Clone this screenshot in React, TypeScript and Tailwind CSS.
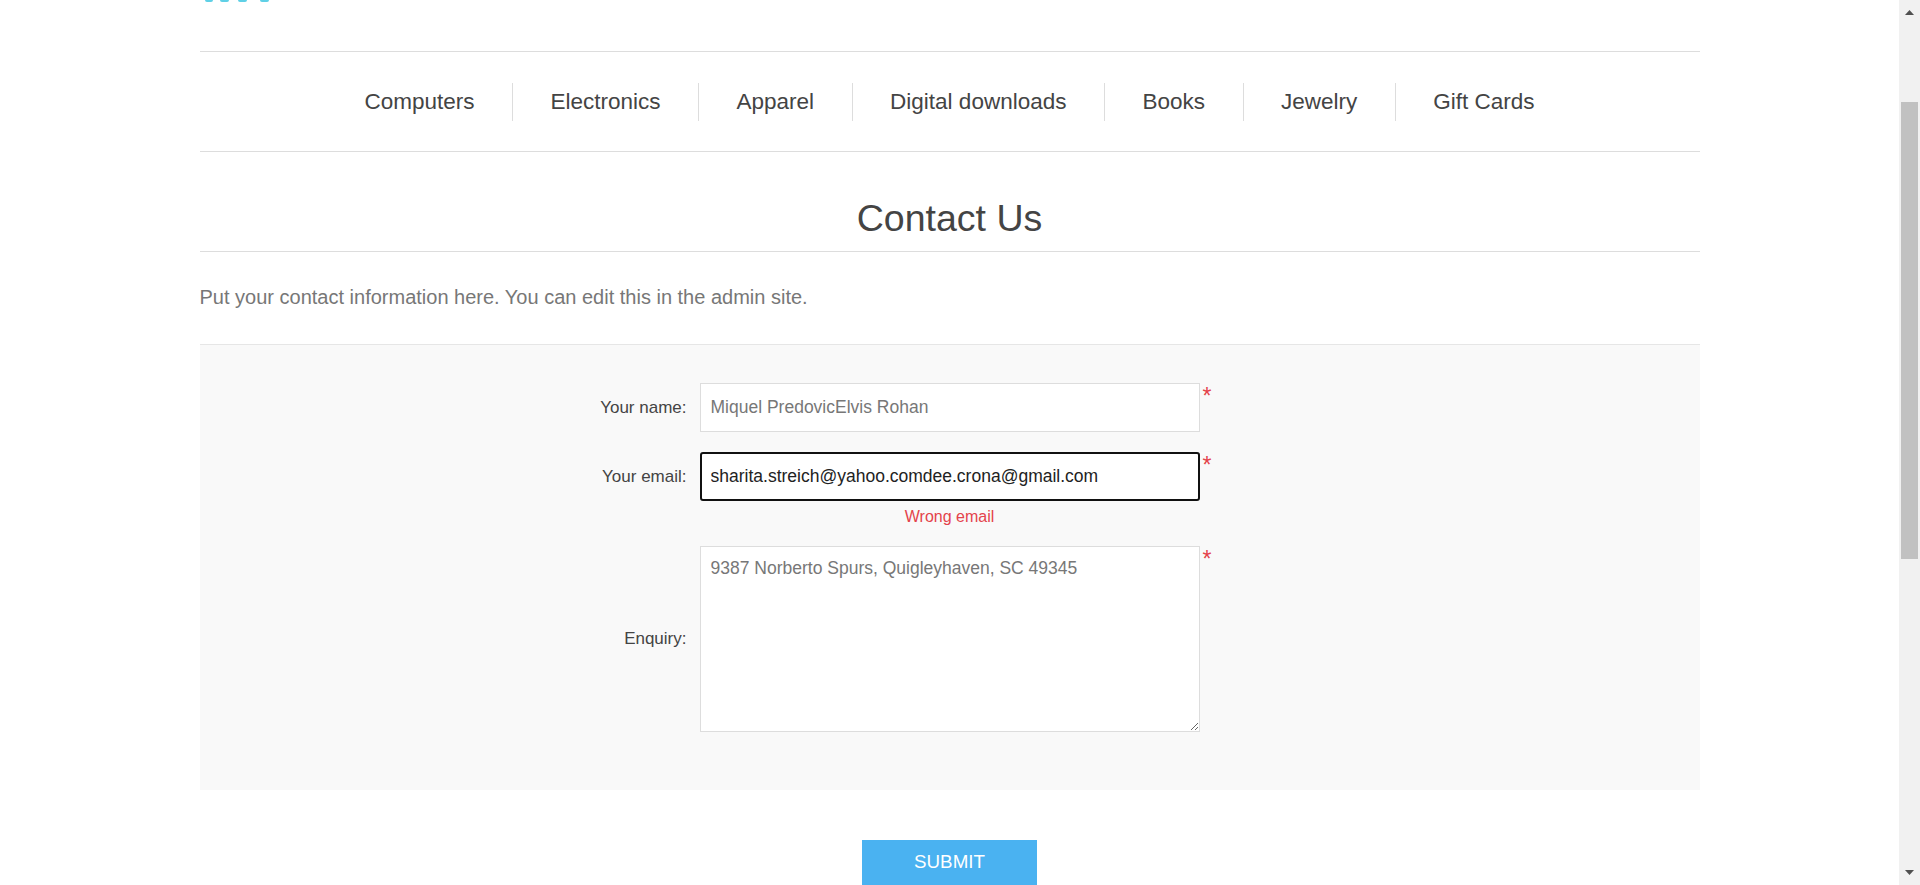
import React from "react";

const menu = ["Computers", "Electronics", "Apparel", "Digital downloads", "Books", "Jewelry", "Gift Cards"];

function Required() {
  return <span className="ml-[3px] mt-[2px] self-start text-[23px] leading-none text-[#e4434b]">*</span>;
}

export default function App() {
  return (
    <div className="flex h-[885px] overflow-hidden bg-white font-['Liberation_Sans',Arial,sans-serif]">
      {/* page */}
      <div className="flex-1">
        <div className="mx-auto w-[1500px]">
          {/* header (scrolled, logo bottom edge only) */}
          <div className="flex h-[51px] items-start gap-[7px] pl-[5px]">
            <span className="h-[2px] w-[8px] rounded-b-full bg-[#5fd0e6]" />
            <span className="h-[2px] w-[9px] rounded-b-full bg-[#5fd0e6]" />
            <span className="ml-[2px] h-[2px] w-[9px] rounded-b-full bg-[#5fd0e6]" />
            <span className="ml-[6px] h-[2px] w-[9px] rounded-b-full bg-[#5fd0e6]" />
          </div>

          {/* top menu */}
          <nav className="flex h-[101px] items-center justify-center border-y border-[#ddd]">
            {menu.map((item, i) => (
              <div
                key={item}
                className={
                  i === 0
                    ? "px-[37.5px] text-[22.5px] leading-[38px] text-[#444]"
                    : "border-l border-[#ddd] px-[37.5px] text-[22.5px] leading-[38px] text-[#444]"
                }
              >
                {item}
              </div>
            ))}
          </nav>

          {/* title */}
          <div className="border-b border-[#ddd] pt-[44px] pb-[10px] text-center">
            <h1 className="text-[37.5px] leading-[45px] text-[#444]">Contact Us</h1>
          </div>

          <p className="mt-[34px] mb-[35px] text-[20px] leading-[23px] text-[#777]">
            Put your contact information here. You can edit this in the admin site.
          </p>

          {/* form */}
          <div className="border-t border-[#e6e6e6] bg-[#f9f9f9] pt-[38px] pb-[58px]">
            <div className="flex items-center">
              <label className="w-[500px] pr-[13px] text-right text-[17px] text-[#444]">Your name:</label>
              <input
                readOnly
                defaultValue="Miquel PredovicElvis Rohan"
                className="h-[49px] w-[500px] border border-[#ddd] bg-white px-[10px] text-[17.5px] text-[#777] outline-none"
              />
              <Required />
            </div>

            <div className="mt-[20px] flex items-center">
              <label className="w-[500px] pr-[13px] text-right text-[17px] text-[#444]">Your email:</label>
              <input
                readOnly
                defaultValue="sharita.streich@yahoo.comdee.crona@gmail.com"
                className="h-[49px] w-[500px] rounded-[3px] border-2 border-[#111] bg-white px-[9px] text-[17.5px] text-[#222] outline-none"
              />
              <Required />
            </div>
            <div className="mt-[6px] flex">
              <div className="w-[500px]" />
              <span className="w-[500px] text-center text-[16px] leading-[20px] text-[#e4434b]">Wrong email</span>
            </div>

            <div className="mt-[19px] flex items-center">
              <label className="w-[500px] pr-[13px] text-right text-[17px] text-[#444]">Enquiry:</label>
              <textarea
                readOnly
                defaultValue="9387 Norberto Spurs, Quigleyhaven, SC 49345"
                className="h-[186px] w-[500px] border border-[#ddd] bg-white px-[10px] py-[10px] text-[17.5px] leading-[22px] text-[#777] outline-none"
              />
              <Required />
            </div>
          </div>

          <div className="mt-[50px] flex justify-center">
            <button className="h-[45px] w-[175px] bg-[#4ab2f1] text-[18.75px] text-white">SUBMIT</button>
          </div>
        </div>
      </div>

      {/* scrollbar */}
      <div className="flex w-[21px] flex-col bg-[#f1f1f1]">
        <div className="flex h-[25px] items-center justify-center">
          <svg width="9" height="5" viewBox="0 0 9 5">
            <path d="M4.5 0L9 5H0z" fill="#505050" />
          </svg>
        </div>
        <div className="h-[77px]" />
        <div className="mx-[2px] h-[457px] bg-[#c1c1c1]" />
        <div className="flex-1" />
        <div className="flex h-[25px] items-center justify-center">
          <svg width="9" height="5" viewBox="0 0 9 5">
            <path d="M0 0H9L4.5 5z" fill="#505050" />
          </svg>
        </div>
      </div>
    </div>
  );
}
